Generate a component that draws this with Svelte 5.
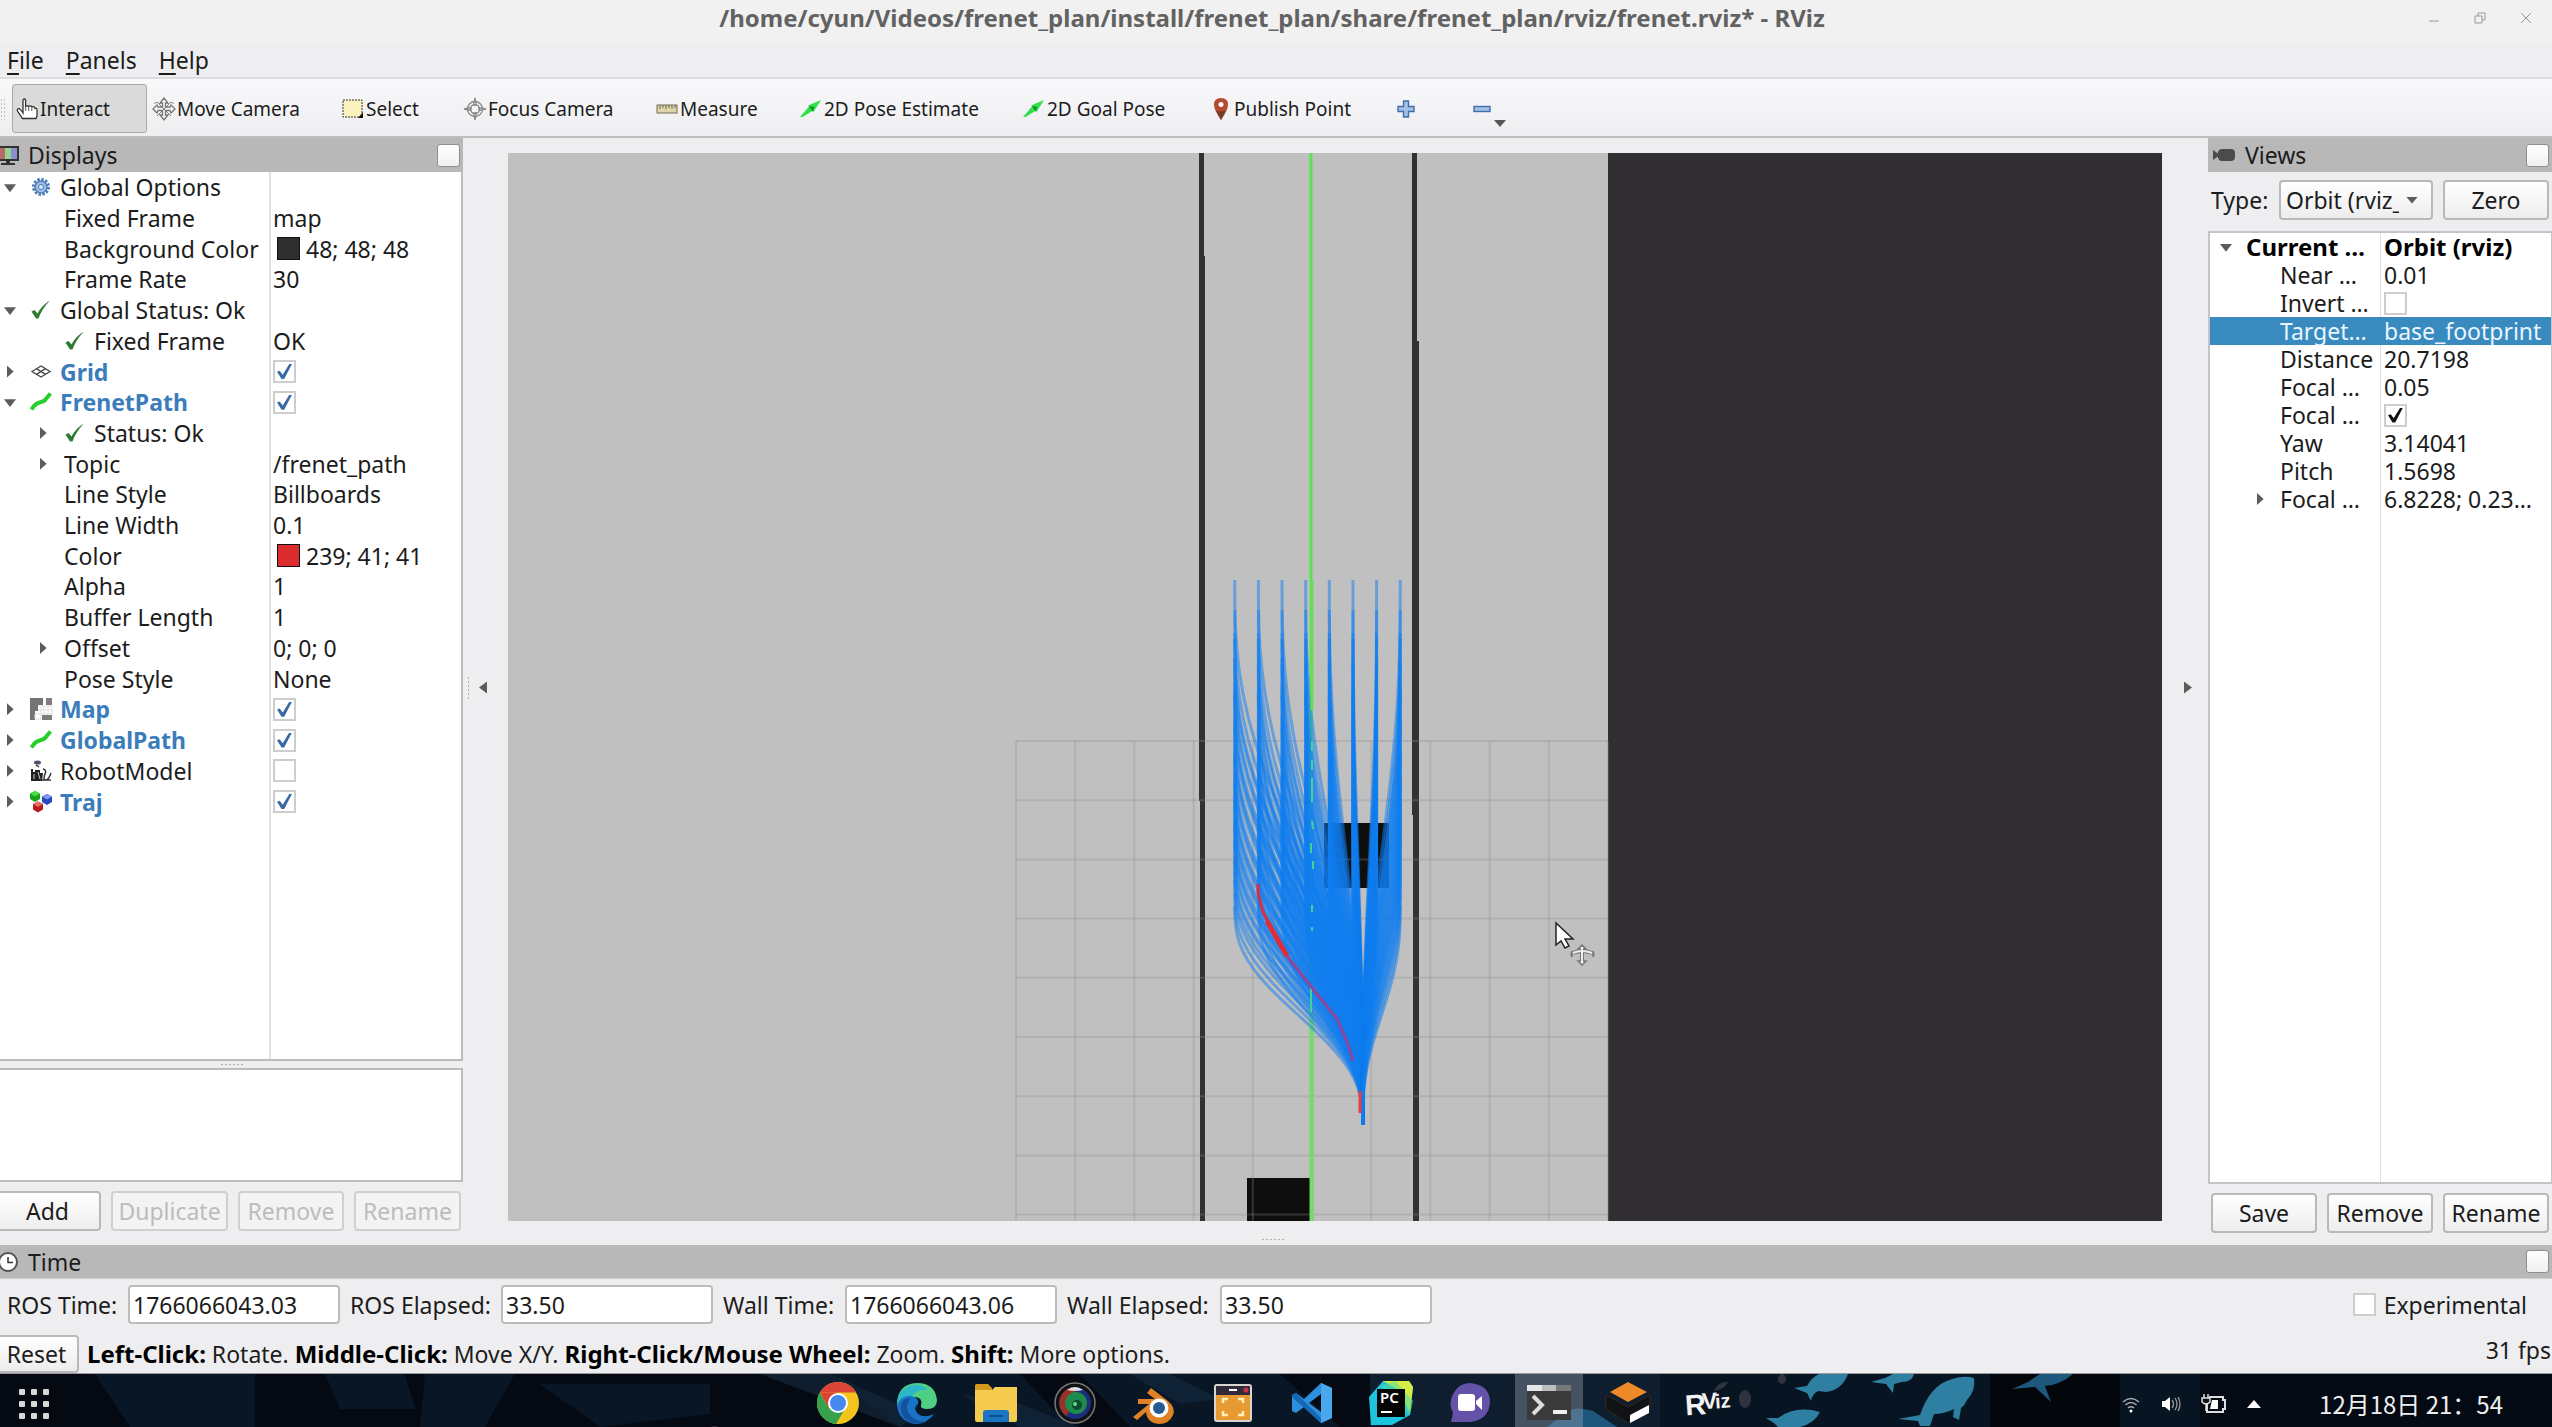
<script lang="ts">
	interface Row {
		label: string;
		level: 0 | 1;
		icon?: string;
		arrow?: 'open' | 'closed';
		value?: string;
		checked?: boolean;
		swatch?: string;
		link?: boolean;
	}

	interface ViewRow {
		label: string;
		value?: string;
		checked?: boolean;
		arrow?: boolean;
		selected?: boolean;
	}

	const tools = [
		{ icon: 'hand', label: 'Interact' },
		{ icon: 'move', label: 'Move Camera' },
		{ icon: 'select', label: 'Select' },
		{ icon: 'focus', label: 'Focus Camera' },
		{ icon: 'ruler', label: 'Measure' },
		{ icon: 'arrow', label: '2D Pose Estimate' },
		{ icon: 'arrow', label: '2D Goal Pose' },
		{ icon: 'pin', label: 'Publish Point' }
	];

	const displays: Row[] = [
		{ label: 'Global Options', level: 0, icon: 'gear', arrow: 'open' },
		{ label: 'Fixed Frame', level: 1, value: 'map' },
		{ label: 'Background Color', level: 1, value: '48; 48; 48', swatch: '#302e30' },
		{ label: 'Frame Rate', level: 1, value: '30' },
		{ label: 'Global Status: Ok', level: 0, icon: 'check', arrow: 'open' },
		{ label: 'Fixed Frame', level: 1, icon: 'check', value: 'OK' },
		{ label: 'Grid', level: 0, icon: 'grid', arrow: 'closed', checked: true, link: true },
		{ label: 'FrenetPath', level: 0, icon: 'path', arrow: 'open', checked: true, link: true },
		{ label: 'Status: Ok', level: 1, icon: 'check', arrow: 'closed' },
		{ label: 'Topic', level: 1, arrow: 'closed', value: '/frenet_path' },
		{ label: 'Line Style', level: 1, value: 'Billboards' },
		{ label: 'Line Width', level: 1, value: '0.1' },
		{ label: 'Color', level: 1, value: '239; 41; 41', swatch: '#dd2c2e' },
		{ label: 'Alpha', level: 1, value: '1' },
		{ label: 'Buffer Length', level: 1, value: '1' },
		{ label: 'Offset', level: 1, arrow: 'closed', value: '0; 0; 0' },
		{ label: 'Pose Style', level: 1, value: 'None' },
		{ label: 'Map', level: 0, icon: 'map', arrow: 'closed', checked: true, link: true },
		{ label: 'GlobalPath', level: 0, icon: 'path', arrow: 'closed', checked: true, link: true },
		{ label: 'RobotModel', level: 0, icon: 'robot', arrow: 'closed', checked: false },
		{ label: 'Traj', level: 0, icon: 'markers', arrow: 'closed', checked: true, link: true }
	];

	const viewRows: ViewRow[] = [
		{ label: 'Near …', value: '0.01' },
		{ label: 'Invert …', checked: false },
		{ label: 'Target…', value: 'base_footprint', selected: true },
		{ label: 'Distance', value: '20.7198' },
		{ label: 'Focal …', value: '0.05' },
		{ label: 'Focal …', checked: true },
		{ label: 'Yaw', value: '3.14041' },
		{ label: 'Pitch', value: '1.5698' },
		{ label: 'Focal …', value: '6.8228; 0.23…', arrow: true }
	];

	const clocks = [
		{ id: 'ros-time', label: 'ROS Time:', value: '1766066043.03' },
		{ id: 'ros-elapsed', label: 'ROS Elapsed:', value: '33.50' },
		{ id: 'wall-time', label: 'Wall Time:', value: '1766066043.06' },
		{ id: 'wall-elapsed', label: 'Wall Elapsed:', value: '33.50' }
	];

	const apps = [
		'chrome',
		'edge',
		'files',
		'camera',
		'blender',
		'recorder',
		'vscode',
		'pycharm',
		'meet',
		'terminal',
		'sublime',
		'rviz'
	];

	const gridColumns = Array.from({ length: 11 }, (_, i) => 508 + i * 59.2);
	const gridRows = Array.from({ length: 9 }, (_, i) => 588 + i * 59.2);

	// Candidate trajectories: quintic lateral offset, 8 lanes, several horizons
	const start = { x: 854.7, y: 972 };

	function trajectory(endX: number, endY: number): string {
		const points: string[] = [];
		for (let i = 0; i <= 24; i++) {
			const t = i / 24;
			const s = 10 * t ** 3 - 15 * t ** 4 + 6 * t ** 5;
			const x = start.x + (endX - start.x) * s;
			const y = start.y + (endY - start.y) * t;
			points.push(`${x.toFixed(1)},${y.toFixed(1)}`);
		}
		return points.join(' ');
	}

	const horizons = [
		427, 457, 480, 486, 505, 511, 530, 537, 543, 562, 568, 575, 592, 598, 604, 619, 624, 630, 642,
		648, 653, 664, 670, 675, 686, 691, 703, 708, 718, 727, 740, 753
	];
	const trajectories = Array.from({ length: 8 }, (_, lane) =>
		horizons.map((y) => trajectory(726.7 + lane * 23.65, y))
	).flat();
</script>

{#snippet icon(name: string)}
	<svg class="icon" viewBox="0 0 22 22" aria-hidden="true">
		{#if name === 'hand'}
			<path
				d="M7 13V2.500q0-1.500 1.300-1.500t1.300 1.500V9q0-1.300 1.500-1.300T12.700 9q.2-1.200 1.600-1.100T15.800 9.500q.3-1 1.700-.8T19 10.500q2-.7 2 1.300v6l-1 2.700H6.500L1.500 13q-.7-2 1-2.300Q4 10.500 7 15z"
				fill="#fff"
				stroke="#333"
				stroke-width="1.300"
			/>
			<path d="M9.700 9v4M12.700 9v4M15.800 10v3" stroke="#555" stroke-width="1" />
		{:else if name === 'move'}
			<g fill="none" stroke="#777" stroke-width="1.300">
				<path d="M11 0 7 5h2.500v4H5L4 7 0 11l4 4 1-2.500h4.500V17H7l4 5 4-5h-2.500v-4.500H17l1 2.500 4-4-4-4-1 2h-4.500V5H15z" />
				<path d="M1 5.500 4 4l14 14M21 5.500 18 4 4 18" stroke-width=".9" />
			</g>
		{:else if name === 'select'}
			<rect x="1" y="2" width="19" height="17" fill="#fbf3bd" stroke="#333" stroke-dasharray="2 1" />
			<path d="m21 14-5 6h5z" fill="#111" />
		{:else if name === 'focus'}
			<g fill="none" stroke="#8a8a8a" stroke-width="1.300">
				<circle cx="11" cy="11" r="7.500" />
				<circle cx="11" cy="11" r="4.500" />
				<path d="M11 0 9.500 7h3zM11 22l-1.500-7h3zM0 11l7-1.500v3zM22 11l-7-1.500v3z" />
			</g>
		{:else if name === 'ruler'}
			<rect x="1" y="7" width="20" height="8" fill="#ddd6aa" stroke="#6f6b56" />
			<path d="M4 7v4M7 7v3M10 7v4M13 7v3M16 7v4M19 7v3" stroke="#6f6b56" />
		{:else if name === 'arrow'}
			<path d="M0 19 9 8.500 8 7.500 21 2 13.500 14l-1.200-1L2.500 19z" fill="#2fe04b" />
			<path d="m9 8.500 4 5 1-5z" fill="#148a28" />
		{:else if name === 'pin'}
			<path d="M11 0q7 0 7 6.500Q18 12 11 22 4 12 4 6.500 4 0 11 0" fill="#b4492f" />
			<path d="M11 22q3-5 4.500-9h-9q1.500 4 4.500 9" fill="#74402c" />
			<circle cx="11" cy="6.500" r="2.500" fill="#fff" />
		{:else if name === 'plus'}
			<path d="M8.500 3h5v5.500H19v5h-5.500V19h-5v-5.500H3v-5h5.500z" fill="#a3c1e4" stroke="#3f6ea8" stroke-width="1.400" />
		{:else if name === 'minus'}
			<rect x="3" y="8.500" width="16" height="5" fill="#a3c1e4" stroke="#3f6ea8" stroke-width="1.400" />
		{:else if name === 'gear'}
			<circle cx="11" cy="11" r="7.500" fill="none" stroke="#4d7cb8" stroke-width="3" stroke-dasharray="2.400 1.530" />
			<circle cx="11" cy="11" r="6" fill="#9fbde2" stroke="#4d7cb8" stroke-width="1.400" />
			<circle cx="11" cy="11" r="2.500" fill="#dce8f6" stroke="#4d7cb8" />
		{:else if name === 'check'}
			<path d="m1.500 12.500 3-1.500 3 3.500Q12 6 20 1.500 12 9.500 8.500 19.500H6z" fill="#2e7a30" />
		{:else if name === 'grid'}
			<g fill="none" stroke="#4a4a4a" stroke-width="1.400">
				<path d="M2 10.500 11 5l9 5.500-9 5.500z" />
				<path d="m6.500 7.700 9 5.600M15.500 7.700l-9 5.600" />
			</g>
		{:else if name === 'path'}
			<path d="M1.500 18.500q3.500-6 8-7t6-3 5-6" fill="none" stroke="#27cf2c" stroke-width="4" />
		{:else if name === 'map'}
			<path d="M0 0h13v7H8v6H5v9H0z" fill="#747474" />
			<path d="M16 0h6v7h-6zM12 17h10v5H12z" fill="#7d7d7d" />
			<path d="M8 8h14v8H5v5h6V9M14 8v8M18 8v8M8 12h14" fill="none" stroke="#ddd" />
		{:else if name === 'robot'}
			<ellipse cx="7.500" cy="2.500" rx="3.500" ry="2" fill="#4e4e70" />
			<path d="M1 9h2v3h2v-2h5v3h3l-1 8H1z" fill="#222" />
			<path d="M13 9q4 1 2 5-2 5 0 6 3 1 6-7M10 20h11M6 5l3 2" fill="none" stroke="#333" stroke-width="1.500" />
			<path d="M4 14v5M8 12l2 7" stroke="#ccc" />
		{:else if name === 'markers'}
			<path d="m5 0 5 2.500V8l-5 3-5-3V2.500z" fill="#16a51c" />
			<path d="m5 0 5 2.500L5 5.500 0 2.500z" fill="#4bdc4a" />
			<path d="m17 3 5 2.500v5.500l-5 3-5-3V5.500z" fill="#2749bd" />
			<path d="m17 3 5 2.500-5 3-5-3z" fill="#7f9af0" />
			<path d="m8 10.500 5 2.500v5.500l-5 3-5-3V13z" fill="#b81a1a" />
			<path d="m8 10.500 5 2.500-5 3-5-3z" fill="#e66b62" />
		{:else if name === 'monitor'}
			<path d="M-3 2h22v15H-3z" fill="#333" />
			<path d="M-1 4h6v11h-6z" fill="#b56a6c" />
			<path d="M5 4h6v11H5z" fill="#8fd58c" />
			<path d="M11 4h6v11h-6z" fill="#8d8fd0" />
			<path d="M6 17h4v2h5v2H1v-2h5z" fill="#333" />
		{:else if name === 'camcorder'}
			<path d="M0 6l5 3.500V8q1-3 4-3h9q4 0 4 4v4q0 4-4 4H9q-3 0-4-3v-1.500L0 16z" fill="#4b4b4b" />
		{:else if name === 'clock'}
			<circle cx="8" cy="11" r="9" fill="#fff" stroke="#555" stroke-width="2" />
			<path d="M8 6v5.500h5" fill="none" stroke="#333" stroke-width="1.500" />
		{/if}
	</svg>
{/snippet}

{#snippet app(name: string)}
	<svg class="app-icon" viewBox="0 0 44 44" aria-hidden="true">
		{#if name === 'chrome'}
			<circle cx="22" cy="22" r="21" fill="#f3c51c" />
			<path d="M3.800 11.500A21 21 0 0 1 40.200 11.500H22z" fill="#dc4437" />
			<path d="M3.800 11.500A21 21 0 0 0 20 43l9.500-16L13 27z" fill="#35a14c" />
			<path d="M3.800 11.500 13 27l9-15.500z" fill="#dc4437" />
			<circle cx="22" cy="22" r="10" fill="#fff" />
			<circle cx="22" cy="22" r="8" fill="#4688f0" />
		{:else if name === 'edge'}
			<path d="M2 24Q2 3 22 2q18 0 20 17 0 9-10 9-7 0-6-4 2-8-7-8Q8 16 2 24" fill="#4fcf83" />
			<path d="M2 24Q3 6 19 4q11 0 13 5-8-1-13 4-8 9-4 20Q8 27 2 24" fill="#2bb7c8" />
			<path d="M2 24q4-10 14-9 9 2 7 8-5 3-1 9 6 6 17 1-7 10-19 10Q4 41 2 24" fill="#1673c8" />
			<path d="M16 17q-8 10 0 18 7 7 16 5-9 4-16 2Q4 36 6 23q3-7 10-6" fill="#14539c" />
		{:else if name === 'files'}
			<path d="M1 5q0-2 2-2h11l4 4v5H1z" fill="#d49a1c" />
			<path d="M1 9h17l3-3h22v33q0 2-2 2H3q-2 0-2-2z" fill="#f5cc4f" />
			<path d="M9 41V32q0-3 3-3h20q3 0 3 3v9z" fill="#1b74c4" />
			<path d="M15 35h14" stroke="#0f4f90" stroke-width="2" />
		{:else if name === 'camera'}
			<circle cx="22" cy="22" r="20" fill="#111" stroke="#777" stroke-width="1.500" />
			<circle cx="22" cy="22" r="16" fill="#1b2d7d" />
			<path d="M22 6a16 16 0 0 0-9 29l9-13z" fill="#9e2f27" />
			<circle cx="23" cy="22" r="11" fill="#1e8b4c" />
			<circle cx="24" cy="24" r="5" fill="#0b4a2c" />
			<circle cx="22" cy="23" r="2" fill="#5fe08d" />
			<path d="M14 9q8-6 16 0-8 2-16 0" fill="#ddd" />
		{:else if name === 'blender'}
			<path d="M1 36 17 23H6v-5h17l-8-6 4-5 17 13q8 7 5 14-4 9-14 9-12-1-13-12L5 39z" fill="#e08126" />
			<circle cx="27" cy="27" r="9.500" fill="#fff" />
			<circle cx="27" cy="27" r="6" fill="#265a94" />
		{:else if name === 'recorder'}
			<rect x="3" y="3" width="38" height="38" rx="3" fill="#d8d4d2" />
			<rect x="5" y="5" width="34" height="9" fill="#322a38" />
			<rect x="5" y="14" width="34" height="25" fill="#e79a32" />
			<path d="M18 9h8" stroke="#fff" stroke-width="2" />
			<circle cx="35" cy="9" r="2.500" fill="#c43245" />
			<path d="M12 22v-4h5M27 18h5v4M32 30v4h-5M17 34h-5v-4" fill="none" stroke="#fff0bb" stroke-width="2.500" />
		{:else if name === 'vscode'}
			<path d="m31 2-17 16-8-6-4 2v16l4 2 8-6 17 16 11-5V7zm0 11v18L19 22z" fill="#2c8fdc" fill-rule="evenodd" />
			<path d="m2 14 4-2 25 25v5L2 16z" fill="#1468b4" />
			<path d="m31 2 11 5v30l-11 5z" fill="#49a8ec" />
		{:else if name === 'pycharm'}
			<path d="M14 0h26l4 6-3 28-18 10H2L0 16z" fill="#1ec3dc" />
			<path d="M14 0h26l4 6-3 25-11-22z" fill="#d5ec45" />
			<path d="M26 0 44 20l-3 14L12 5z" fill="#58dd94" opacity=".6" />
			<rect x="8" y="8" width="28" height="28" fill="#050505" />
			<text x="11" y="22" font-family="Noto Sans" font-size="15" font-weight="600" fill="#fff">PC</text>
			<path d="M12 31h11" stroke="#fff" stroke-width="2" />
		{:else if name === 'meet'}
			<path d="M22 2q20 2 20 19-1 18-20 20H3l2-9q-5-9 0-19Q11 2 22 2" fill="#6451a8" />
			<rect x="10" y="13" width="17" height="17" rx="3" fill="#fff" />
			<path d="m28 20 6-5v14l-6-6z" fill="#fff" />
		{:else if name === 'terminal'}
			<path d="M0 4h44v35H0z" fill="#3a3a3a" />
			<path d="M0 4h15v6H0z" fill="#e5e5e5" />
			<path d="M15 4h14v6H15z" fill="#bdbdbd" />
			<path d="M29 4h15v6H29z" fill="#777" />
			<path d="m6 15 9 9-9 9" fill="none" stroke="#ddd" stroke-width="4" />
			<path d="M26 31h14" stroke="#eee" stroke-width="4" />
		{:else if name === 'sublime'}
			<path d="M22 1 41 11 22 21 4 11z" fill="#ee8a28" />
			<path d="M0 14 22 26 44 14v14L22 42 0 28z" fill="#111216" stroke="#38271e" />
			<path d="m24 34 19-10v8L24 42z" fill="#fff" />
		{:else}
			<g class="rviz-mark" transform="rotate(-4 22 22)">
				<text x="0" y="33" font-size="29">R</text>
				<text x="17" y="28" font-size="23">V</text>
				<text x="30" y="28" font-size="20">iz</text>
			</g>
		{/if}
	</svg>
{/snippet}

<div class="desktop">
	<header class="titlebar">
		<h1>/home/cyun/Videos/frenet_plan/install/frenet_plan/share/frenet_plan/rviz/frenet.rviz* - RViz</h1>
		<div class="window-buttons">
			<button aria-label="Minimize"><svg viewBox="0 0 12 12"><path d="M1 9h10" /></svg></button>
			<button aria-label="Restore">
				<svg viewBox="0 0 12 12"><path d="M1 4h7v7H1zM4 4V1h7v7H8" /></svg>
			</button>
			<button aria-label="Close"><svg viewBox="0 0 12 12"><path d="m1 1 10 10M11 1 1 11" /></svg></button>
		</div>
	</header>

	<nav class="menubar">
		<button><u>F</u>ile</button>
		<button><u>P</u>anels</button>
		<button><u>H</u>elp</button>
	</nav>

	<div class="toolbar" role="toolbar" aria-label="Tools">
		<span class="grip"></span>
		{#each tools as tool, i}
			<button class="tool" class:active={i === 0}>
				{@render icon(tool.icon)}
				<span>{tool.label}</span>
			</button>
		{/each}
		<button class="tool" aria-label="Add tool">{@render icon('plus')}</button>
		<button class="tool" aria-label="Remove tool">
			{@render icon('minus')}
			<i class="menu-arrow"></i>
		</button>
	</div>

	<main class="workspace">
		<section class="panel displays">
			<header class="dock-title">
				{@render icon('monitor')}
				<h2>Displays</h2>
				<button class="dock-close" aria-label="Close Displays"></button>
			</header>
			<div class="tree">
				<table class="display-table">
					<tbody>
						{#each displays as row}
							<tr>
								<td class="name level-{row.level}">
									<div class="cell">
										<i class="arrow {row.arrow ?? ''}"></i>
										{#if row.icon}{@render icon(row.icon)}{/if}
										<span class="label" class:link={row.link}>{row.label}</span>
									</div>
								</td>
								<td class="value">
									<div class="cell">
										{#if row.checked !== undefined}
											<input type="checkbox" checked={row.checked} aria-label={row.label} />
										{/if}
										{#if row.swatch}
											<i class="swatch" style:background={row.swatch}></i>
										{/if}
										{row.value ?? ''}
									</div>
								</td>
							</tr>
						{/each}
					</tbody>
				</table>
			</div>
			<div class="splitter"><i class="dots"></i></div>
			<div class="description"></div>
			<div class="buttons">
				<button class="push">Add</button>
				<button class="push" disabled>Duplicate</button>
				<button class="push" disabled>Remove</button>
				<button class="push" disabled>Rename</button>
			</div>
		</section>

		<div class="collapse">
			<i class="dots vertical"></i>
			<button class="collapse-left" aria-label="Hide left dock"></button>
		</div>

		<div class="center">
			<div class="viewport">
				<svg viewBox="0 0 1654 1068" preserveAspectRatio="xMidYMid slice" role="img" aria-label="3D view">
					<rect width="1654" height="1068" fill="#c0c0c0" />
					<rect x="1100" width="554" height="1068" fill="#322f32" />

					<g fill="#323232">
						<path d="M691 0h5v103h1v965h-5V648h-1z" />
						<path d="M904 0h5v188h2v880h-6V662h-1z" />
					</g>
					<g fill="#0e0e0e">
						<rect x="816" y="670" width="65" height="65" />
						<rect x="739" y="1025" width="64" height="43" />
					</g>

					<g class="grid-lines">
						{#each gridColumns as x}
							<line x1={x} y1="588" x2={x} y2="1068" />
						{/each}
						{#each gridRows as y}
							<line x1="508" y1={y} x2="1100" y2={y} />
						{/each}
					</g>

					<path d="M803 0v1068" stroke="#5be352" stroke-width="3" />
					<path d="M804 860v208" stroke="#7ad86e" stroke-width="4" />

					<g class="trajectories">
						{#each trajectories as points}
							<polyline {points} />
						{/each}
					</g>

					<path d="M804 427v130" stroke="#66dd55" stroke-width="3" />
					<path class="glimpse" d="M804 588v10M804 607v10M804 625v24M804 668l1 8M803 690v10M805 708v8M804 752v7M804 774v4M803 835v24" />
					<path d="M750 731v9l5 19 12 23 12 21" fill="none" stroke="#d92f42" stroke-width="3" />
					<path d="m759 768 8 14 12 21" fill="none" stroke="#e02c38" stroke-width="5" />
					<path d="m779 803 26 33 24 30 11 25 5 17" fill="none" stroke="#8f4699" stroke-width="3" />
					<path d="M852 938v22" stroke="#ee3a41" stroke-width="3" />

					<g transform="translate(1048 770)">
						<path d="M0 0v22l5-4 4 7 4-2-4-7h8z" fill="#fff" stroke="#222" stroke-width="1.500" />
						<g fill="none" stroke="#777" stroke-width="4">
							<path d="M26 24v16M17 30q9-4 19 0" />
						</g>
						<path
							d="m26 22-4 4h8zM26 42l-4-4h8zM16 28v6l-1-3zM37 28v6l1-3z"
							fill="#eee"
							stroke="#777"
							stroke-width="1.500"
						/>
						<g fill="none" stroke="#eee" stroke-width="2">
							<path d="M26 24v16M17 30q9-4 19 0" />
						</g>
					</g>
				</svg>
			</div>
			<div class="bottom-splitter"><i class="dots"></i></div>
		</div>

		<div class="collapse right">
			<button class="collapse-right" aria-label="Hide right dock"></button>
		</div>

		<section class="panel views">
			<header class="dock-title">
				{@render icon('camcorder')}
				<h2>Views</h2>
				<button class="dock-close" aria-label="Close Views"></button>
			</header>
			<div class="type-row">
				<label for="view-type">Type:</label>
				<div class="select">
					<select id="view-type">
						<option>Orbit (rviz_</option>
					</select>
				</div>
				<button class="push">Zero</button>
			</div>
			<div class="view-tree">
				<table>
					<tbody>
						<tr class="heading">
							<td>
								<div class="cell">
									<i class="arrow open"></i>
									<span class="label">Current …</span>
								</div>
							</td>
							<td class="value">Orbit (rviz)</td>
						</tr>
						{#each viewRows as row}
							<tr class:selected={row.selected}>
								<td>
									<div class="cell child">
										<i class="arrow" class:closed={row.arrow}></i>
										<span class="label">{row.label}</span>
									</div>
								</td>
								<td class="value">
									{#if row.checked !== undefined}
										<input class="dark" type="checkbox" checked={row.checked} aria-label={row.label} />
									{:else}
										{row.value}
									{/if}
								</td>
							</tr>
						{/each}
					</tbody>
				</table>
			</div>
			<div class="buttons">
				<button class="push">Save</button>
				<button class="push">Remove</button>
				<button class="push">Rename</button>
			</div>
		</section>
	</main>

	<section class="time">
		<header class="dock-title">
			{@render icon('clock')}
			<h2>Time</h2>
			<button class="dock-close" aria-label="Close Time"></button>
		</header>
		<div class="time-row">
			<div class="clocks">
				{#each clocks as clock}
					<label for={clock.id}>{clock.label}</label>
					<input id={clock.id} type="text" value={clock.value} readonly />
				{/each}
			</div>
			<label class="experimental"><input type="checkbox" /> Experimental</label>
		</div>
	</section>

	<footer class="statusbar">
		<button class="push reset">Reset</button>
		<p>
			<b>Left-Click:</b> Rotate. <b>Middle-Click:</b> Move X/Y. <b>Right-Click/Mouse Wheel:</b> Zoom.
			<b>Shift:</b> More options.
		</p>
		<span class="fps">31 fps</span>
	</footer>

	<footer class="taskbar">
		<svg class="wallpaper" viewBox="0 0 2552 53" preserveAspectRatio="none" aria-hidden="true">
			<rect width="2552" height="53" fill="#050a12" />
			<g fill="#081626">
				<path d="M95 0h160v53H130zM325 0h80l10 35H340zM425 0h90l-30 53H420zM540 10h170v30l-110 13z" />
				<path d="M830 0h190l50 53H900zM1080 0h200l60 53h-210z" />
			</g>
			<g fill="#12263a" opacity=".7">
				<path d="M760 0h70l90 40-20 13zM960 20l60 10 60 23h-60zM1130 0h40l50 25-40 5z" />
				<path d="M1370 0h420v53h-420z" />
			</g>
			<path d="M1660 0h880v53h-880z" fill="#071523" />
			<path d="M1990 0h130v53h-130z" fill="#03060b" />
			<path d="M2200 0h352v53h-352z" fill="#040a13" />
			<g fill="#2e7fa2">
				<path d="M1848 0q-6 16-22 18l-8-1q-6 3-7 10l-4-8-13-5 13-2q5-9 12-12z" />
				<path d="M1914 0q-2 8-12 8l-8 2-1 9-7-9-15-2 14-4 8-4z" />
				<path d="M1974 4q2 12-7 22-2 5-6 8l-2 12-6-3 1-8q-10 5-20 5l-4 12h-10l-2-5-20-2 22-4q10-30 32-36 12-4 22-1" />
				<path d="M1820 38q-5 11-20 15h-22l-4-4-8-5 12 0q18-13 42-6" />
			</g>
			<g fill="#1e567c">
				<path d="M2073 0q-13 11-28 12l6 16-16-15-23 2 16-7 12-8z" />
				<path d="M1568 37q8-5 25 0l24 16h-70z" />
			</g>
			<g fill="#30333f">
				<ellipse cx="1745" cy="25" rx="6" ry="9" />
				<path d="M1714 17q4-10 14-9-4 8-14 9" />
				<ellipse cx="1782" cy="5" rx="4" ry="5" />
				<circle cx="715" cy="60" r="8" />
			</g>
		</svg>
		<button class="launcher" aria-label="Show applications">
			{#each Array(9) as _}
				<i></i>
			{/each}
		</button>
		<div class="apps">
			{#each apps as name}
				<button class="app" class:running={name === 'terminal'} aria-label={name}>
					{@render app(name)}
				</button>
			{/each}
		</div>
		<div class="tray">
			<svg class="tray-icon" viewBox="0 0 20 20" aria-label="Wi-Fi">
				<g fill="none" stroke="#aaa" stroke-width="1.500">
					<path d="M2 8q8-7 16 0M4.500 11q5.500-5 11 0M7 14q3-2.500 6 0" />
				</g>
				<circle cx="10" cy="17" r="1.500" fill="#fff" />
			</svg>
			<svg class="tray-icon" viewBox="0 0 20 20" aria-label="Volume">
				<path d="M1 7h3l5-4v14l-5-4H1z" fill="#fff" />
				<path d="M11 6q3 4 0 8M14 4q4 6 0 12M17 3q4 7 0 14" fill="none" stroke="#999" stroke-width="1.300" />
			</svg>
			<svg class="tray-icon battery" viewBox="0 0 26 20" aria-label="Battery">
				<path d="M8 3h14v3h2v9h-2v3H6v-8" fill="none" stroke="#ddd" stroke-width="2" />
				<path d="M11 6h6v9H9z" fill="#fff" />
				<path d="M1 4h8v4q-4 4-8 0zM3 0v4M7 0v4M5 9v8" fill="#111" stroke="#ddd" stroke-width="1.500" />
			</svg>
			<i class="tray-arrow"></i>
			<time>12月18日 21：54</time>
		</div>
	</footer>
</div>

<style>
	:global(body) {
		margin: 0;
		background: #eeeef0;
	}

	.desktop {
		display: flex;
		flex-direction: column;
		min-height: 100vh;
		overflow: hidden;
		background: #eeeef0;
		color: #1c1c1c;
		font-family: 'Noto Sans', 'Noto Sans CJK SC', sans-serif;
		font-size: 23px;
		line-height: 28px;
		white-space: nowrap;
	}

	* {
		box-sizing: border-box;
	}

	h1,
	h2,
	p {
		margin: 0;
		font-size: inherit;
		font-weight: inherit;
	}

	button,
	input,
	select {
		margin: 0;
		padding: 0;
		border: 0;
		background: none;
		color: inherit;
		font: inherit;
	}

	.icon {
		display: block;
		flex: none;
		width: 22px;
		height: 22px;
		overflow: visible;
	}

	/* Title, menu and tool bars */
	.titlebar {
		display: grid;
		grid-template-columns: 1fr auto 1fr;
		height: 44px;
		padding-top: 4px;
		background: #f1f1f1;
		color: #626262;
	}

	.titlebar h1 {
		grid-column: 2;
		padding-right: 8px;
		font-size: 24px;
		font-weight: 700;
	}

	.window-buttons {
		display: flex;
		justify-content: flex-end;
		gap: 34px;
		padding-right: 20px;
		height: 28px;
	}

	.window-buttons svg {
		display: block;
		width: 12px;
		height: 12px;
		fill: none;
		stroke: #999;
	}

	.menubar {
		display: flex;
		gap: 22px;
		height: 35px;
		padding: 0 7px 2px;
		border-bottom: 2px solid #dddddf;
	}

	.menubar u {
		text-decoration-thickness: 2px;
		text-underline-offset: 4px;
	}

	.toolbar {
		display: grid;
		grid-template-columns: 10px 135px 187px 120px 190px 142px 221px 185px 183px 74px 60px;
		gap: 2px;
		height: 59px;
		padding: 5px 0 3px;
		border-bottom: 2px solid #bdbdbd;
		background: linear-gradient(#f9f9fb, #eeeef0);
		font-size: 19px;
	}

	.grip {
		width: 5px;
		height: 22px;
		align-self: center;
		background: radial-gradient(#c4c4c4 1px, transparent 1px) 0 0 / 3px 4px;
	}

	.tool {
		position: relative;
		display: flex;
		align-items: center;
		gap: 2px;
		padding-left: 3px;
		border: 1px solid transparent;
		border-radius: 3px;
	}

	.tool.active {
		border-color: #aaa;
		background: #dadada;
	}

	.menu-arrow {
		position: absolute;
		left: 26px;
		bottom: 5px;
		border: 6px solid transparent;
		border-top: 7px solid #555;
		border-bottom: 0;
	}

	/* Docks */
	.workspace {
		display: flex;
		flex: 1;
	}

	.panel {
		display: flex;
		flex: none;
		flex-direction: column;
	}

	.displays {
		width: 463px;
	}

	.views {
		width: 344px;
	}

	.dock-title {
		display: flex;
		align-items: center;
		height: 34px;
		padding: 0 3px 0 0;
		background: #b8b8b8;
	}

	.dock-title h2 {
		flex: 1;
		padding-left: 6px;
	}

	.views .dock-title {
		padding-left: 5px;
	}

	.views .dock-title h2 {
		padding-left: 10px;
	}

	.dock-close {
		width: 23px;
		height: 23px;
		border: 1px solid #8f8f8f;
		border-radius: 3px;
		background: linear-gradient(#fff, #f0f0f0);
	}

	.tree {
		flex: 1;
		border: solid #bcbcbe;
		border-width: 0 2px 2px 0;
		background: linear-gradient(to right, #fff 269px, #e0e0e0 269px 271px, #fff 271px);
	}

	table {
		width: 100%;
		border-spacing: 0;
		table-layout: fixed;
	}

	td {
		padding: 0;
	}

	.display-table {
		height: 645px;
	}

	.display-table .name {
		width: 273px;
	}

	.cell {
		display: flex;
		align-items: center;
		height: 28px;
	}

	.arrow {
		width: 12px;
		height: 12px;
		margin-right: 14px;
	}

	.arrow.open {
		background: #5c5c5c;
		clip-path: polygon(0 25%, 100% 25%, 50% 90%);
	}

	.arrow.closed {
		background: #5c5c5c;
		clip-path: polygon(25% 0, 80% 50%, 25% 100%);
	}

	.level-0 {
		padding-left: 4px;
	}

	.level-1 {
		padding-left: 37px;
	}

	.level-0 .icon,
	.level-1 .icon {
		margin-right: 8px;
	}

	.level-1 .arrow {
		margin-right: 15px;
	}

	.link {
		color: #3b7dba;
		font-weight: 700;
	}

	.swatch {
		width: 23px;
		height: 23px;
		margin: 0 6px 0 4px;
		border: 1px solid #111;
	}

	input[type='checkbox'] {
		display: block;
		width: 23px;
		height: 23px;
		border: 2px solid #cdcdcd;
		background: #fff;
		appearance: none;
	}

	input[type='checkbox']:checked::after {
		display: block;
		width: 15px;
		height: 15px;
		margin: 2px;
		background: #3a6aa5;
		clip-path: polygon(0 52%, 18% 45%, 38% 72%, 82% 0, 100% 0, 48% 100%, 30% 100%);
		content: '';
	}

	input.dark:checked::after {
		background: #111;
	}

	.dots {
		width: 24px;
		height: 3px;
		background: radial-gradient(#b0b0b0 1px, transparent 1px) 0 0 / 4px 3px;
	}

	.dots.vertical {
		width: 3px;
		height: 24px;
		background-size: 3px 4px;
	}

	.splitter {
		display: flex;
		align-items: center;
		justify-content: center;
		height: 7px;
	}

	.description {
		height: 114px;
		border: 2px solid #bcbcbe;
		border-left: 0;
		background: #fff;
	}

	.buttons {
		display: grid;
		gap: 10px;
	}

	.displays .buttons {
		grid-template-columns: 101px 117px 106px 107px;
		padding: 9px 0 14px;
	}

	.views .buttons {
		grid-template-columns: repeat(3, 1fr);
		padding: 9px 3px 12px;
	}

	.push {
		height: 40px;
		border: 2px solid #b9b9b9;
		border-radius: 4px;
		background: linear-gradient(#fff, #ededee);
		text-align: center;
	}

	.push:disabled {
		border-color: #cfcfcf;
		background: #f3f3f4;
		color: #bcbcbc;
	}

	.displays .push:first-child {
		border-left: 0;
		border-radius: 0 4px 4px 0;
		padding-right: 4px;
	}

	.collapse {
		display: flex;
		flex: none;
		align-items: center;
		gap: 9px;
		width: 45px;
		padding: 0 0 8px 4px;
	}

	.collapse.right {
		width: 46px;
		padding-left: 22px;
	}

	.collapse-left,
	.collapse-right {
		width: 8px;
		height: 12px;
		background: #5c5c5c;
		clip-path: polygon(0 50%, 100% 0, 100% 100%);
	}

	.collapse-right {
		clip-path: polygon(0 0, 100% 50%, 0 100%);
	}

	.center {
		display: flex;
		flex: 1;
		flex-direction: column;
		min-width: 0;
		padding-top: 15px;
	}

	.viewport {
		display: grid;
		flex: 1;
		min-height: 0;
	}

	.viewport svg {
		width: 100%;
		height: 100%;
	}

	.bottom-splitter {
		display: flex;
		align-items: flex-end;
		justify-content: center;
		height: 24px;
		padding: 0 124px 4px 0;
	}

	.grid-lines {
		stroke: #8f8f96;
		stroke-opacity: 0.3;
		stroke-width: 2;
	}

	.trajectories {
		fill: none;
		stroke: #0f7df0;
		stroke-opacity: 0.5;
		stroke-width: 3;
	}

	.glimpse {
		fill: none;
		stroke: #3fd29a;
		stroke-width: 2;
	}

	/* Views dock */
	.type-row {
		display: grid;
		grid-template-columns: 58px 154px 106px;
		gap: 10px;
		align-items: center;
		padding: 8px 3px 11px;
	}

	.select {
		display: flex;
		align-items: center;
		height: 40px;
		padding-right: 13px;
		border: 2px solid #b9b9b9;
		border-radius: 4px;
		background: linear-gradient(#fff, #ededee);
	}

	.select::after {
		width: 12px;
		height: 7px;
		margin-left: 7px;
		background: #5c5c5c;
		clip-path: polygon(0 0, 100% 0, 50% 100%);
		content: '';
	}

	.select select {
		flex: 1;
		min-width: 0;
		padding-left: 5px;
		appearance: none;
		overflow: hidden;
		text-overflow: clip;
	}

	.view-tree {
		flex: 1;
		border: 2px solid #c4c4c6;
		border-right-width: 1px;
		background: linear-gradient(to right, #fff 170px, #e0e0e0 170px 171px, #fff 171px);
	}

	.view-tree tr {
		height: 28px;
	}

	.view-tree td:first-child {
		width: 174px;
		padding-left: 10px;
	}

	.view-tree .cell.child {
		padding-left: 34px;
	}

	.view-tree .heading {
		color: #000;
		font-weight: 700;
		font-size: 24px;
	}

	.selected {
		background: #398bbf;
		color: #e9f5ff;
	}

	/* Time dock and status bar */
	.time .dock-title {
		border-bottom: 1px solid #d0d0d0;
	}

	.time-row {
		display: flex;
		align-items: center;
		justify-content: space-between;
		height: 51px;
		padding: 0 25px 0 7px;
	}

	.clocks {
		display: grid;
		grid-template-columns: 111px 212px 141px 212px 112px 212px 143px 212px;
		gap: 10px;
		align-items: center;
	}

	.clocks input {
		width: 100%;
		height: 39px;
		padding: 0 3px;
		border: 2px solid #bcbcbc;
		border-radius: 4px;
		background: #fff;
	}

	.experimental {
		display: flex;
		align-items: center;
		gap: 8px;
	}

	.statusbar {
		display: flex;
		align-items: center;
		gap: 8px;
		height: 44px;
		padding-top: 4px;
		border-bottom: 1px solid #999;
	}

	.statusbar p {
		flex: 1;
	}

	.statusbar b {
		color: #000;
		font-size: 24px;
	}

	.reset {
		width: 79px;
		height: 38px;
		padding-right: 4px;
		border-left: 0;
		border-radius: 0 4px 4px 0;
	}

	.fps {
		padding: 0 1px 8px 0;
	}

	/* Desktop taskbar */
	.taskbar {
		position: relative;
		display: grid;
		grid-template-columns: 1fr auto 1fr;
		align-items: center;
		height: 53px;
		color: #eee;
	}

	.wallpaper {
		position: absolute;
		inset: 0;
		width: 100%;
		height: 100%;
	}

	.launcher {
		position: relative;
		display: grid;
		grid-template-columns: repeat(3, 6px);
		gap: 6px;
		width: 50px;
		padding: 6px 0 0 19px;
	}

	.launcher i {
		height: 6px;
		border-radius: 1px;
		background: #d8d8d8;
	}

	.apps {
		position: relative;
		display: flex;
		gap: 11px;
		height: 53px;
		padding-right: 8px;
	}

	.app {
		display: grid;
		place-items: center;
		width: 68px;
		padding-top: 4px;
	}

	.app.running {
		background: rgba(150, 160, 175, 0.4);
	}

	.app-icon {
		width: 44px;
		height: 44px;
		overflow: visible;
	}

	.rviz-mark {
		fill: #f2f2f2;
		font-family: 'Liberation Sans Narrow', 'Liberation Sans', sans-serif;
		font-weight: 700;
	}

	.tray {
		position: relative;
		display: flex;
		align-items: center;
		justify-content: flex-end;
		gap: 20px;
		padding: 6px 49px 0 0;
	}

	.tray-icon {
		width: 20px;
		height: 20px;
	}

	.tray-icon.battery {
		width: 26px;
	}

	.tray-arrow {
		border: 7px solid transparent;
		border-top: 0;
		border-bottom: 8px solid #fff;
	}

	.tray time {
		margin-left: 38px;
		font-family: 'Noto Sans CJK SC', sans-serif;
		font-size: 24px;
	}
</style>
